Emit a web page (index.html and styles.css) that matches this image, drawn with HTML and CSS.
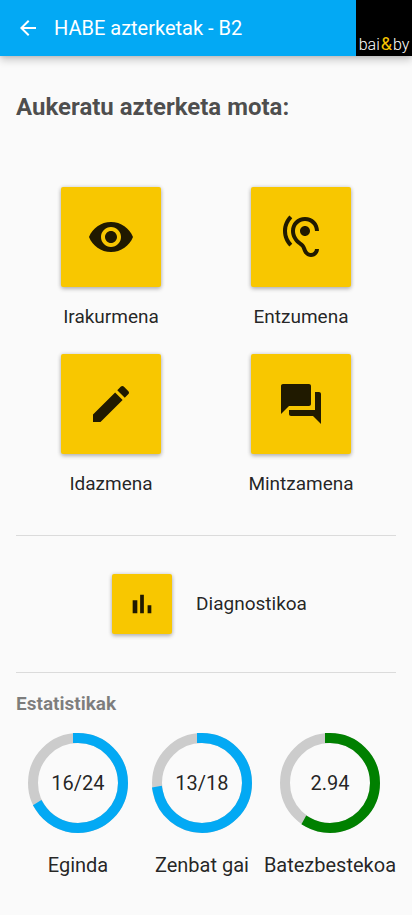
FILE: index.html
```html
<!DOCTYPE html>
<html lang="eu">
<head>
<meta charset="utf-8">
<meta name="viewport" content="width=device-width, initial-scale=1">
<title>HABE azterketak - B2</title>
<link rel="stylesheet" href="styles.css">
</head>
<body>
<header class="toolbar">
  <button class="back" type="button" aria-label="Atzera">
    <svg viewBox="0 0 24 24" width="24" height="24"><path d="M20 11H7.83l5.59-5.59L12 4l-8 8 8 8 1.41-1.41L7.83 13H20v-2z"/></svg>
  </button>
  <span class="title">HABE azterketak - B2</span>
  <a class="logo" href="#">bai<span class="amp">&amp;</span>by</a>
</header>
<main class="content">
  <h1 class="heading">Aukeratu azterketa mota:</h1>
  <section class="types">
    <div class="type">
      <button class="tile" type="button" aria-labelledby="t1">
        <svg viewBox="0 0 24 24" width="48" height="48"><path d="M12 4.5C7 4.5 2.73 7.61 1 12c1.73 4.39 6 7.5 11 7.5s9.27-3.11 11-7.5c-1.73-4.39-6-7.5-11-7.5zM12 17c-2.76 0-5-2.24-5-5s2.24-5 5-5 5 2.24 5 5-2.24 5-5 5zm0-8c-1.66 0-3 1.34-3 3s1.34 3 3 3 3-1.34 3-3-1.34-3-3-3z"/></svg>
      </button>
      <span class="label" id="t1">Irakurmena</span>
    </div>
    <div class="type">
      <button class="tile" type="button" aria-labelledby="t2">
        <svg viewBox="0 0 24 24" width="48" height="48"><path d="M17 20c-.29 0-.56-.06-.76-.15-.71-.37-1.21-.88-1.71-2.38-.51-1.56-1.47-2.29-2.39-3-.79-.61-1.61-1.24-2.32-2.53C9.29 10.98 9 9.93 9 9c0-2.8 2.2-5 5-5s5 2.2 5 5h2c0-3.93-3.07-7-7-7S7 5.07 7 9c0 1.26.38 2.65 1.07 3.9.91 1.65 1.98 2.48 2.85 3.15.81.62 1.39 1.07 1.71 2.05.6 1.82 1.37 2.84 2.73 3.55.51.23 1.07.35 1.64.35 2.21 0 4-1.79 4-4h-2c0 1.1-.9 2-2 2zM7.640 2.640L6.220 1.220C4.230 3.210 3 5.960 3 9s1.230 5.790 3.220 7.780l1.410-1.410C6.010 13.740 5 11.490 5 9s1.010-4.740 2.640-6.360zM11.500 9c0 1.380 1.120 2.500 2.500 2.500s2.500-1.120 2.500-2.500-1.120-2.500-2.500-2.500-2.500 1.120-2.500 2.500z"/></svg>
      </button>
      <span class="label" id="t2">Entzumena</span>
    </div>
    <div class="type">
      <button class="tile" type="button" aria-labelledby="t3">
        <svg viewBox="0 0 24 24" width="48" height="48"><path d="M3 17.25V21h3.750L17.810 9.940l-3.750-3.750L3 17.250zM20.710 7.040c.39-.39.39-1.020 0-1.410l-2.340-2.340c-.39-.39-1.020-.39-1.410 0l-1.830 1.830 3.750 3.750 1.830-1.830z"/></svg>
      </button>
      <span class="label" id="t3">Idazmena</span>
    </div>
    <div class="type">
      <button class="tile" type="button" aria-labelledby="t4">
        <svg viewBox="0 0 24 24" width="48" height="48"><path d="M21 6h-2v9H6v2c0 .55.45 1 1 1h11l4 4V7c0-.55-.45-1-1-1zm-4 6V3c0-.55-.45-1-1-1H3c-.55 0-1 .45-1 1v14l4-4h10c.55 0 1-.45 1-1z"/></svg>
      </button>
      <span class="label" id="t4">Mintzamena</span>
    </div>
  </section>
  <section class="diagnostic">
    <button class="tile small" type="button" aria-labelledby="t5">
      <svg viewBox="0 0 24 24" width="32" height="32"><path d="M5 9.200h3.500V19H5zM10.600 5h2.800v14h-2.800zm5.600 8H19v6h-2.800z"/></svg>
    </button>
    <span class="label" id="t5">Diagnostikoa</span>
  </section>
  <h2 class="subheading">Estatistikak</h2>
  <section class="stats">
    <div class="stat">
      <div class="ring">
        <svg viewBox="0 0 100 100" width="100" height="100"><circle class="track" cx="50" cy="50" r="45"/><circle class="bar" cx="50" cy="50" r="45" pathLength="360" stroke-dasharray="238 360"/></svg>
        <span class="value">16/24</span>
      </div>
      <span class="caption">Eginda</span>
    </div>
    <div class="stat">
      <div class="ring">
        <svg viewBox="0 0 100 100" width="100" height="100"><circle class="track" cx="50" cy="50" r="45"/><circle class="bar" cx="50" cy="50" r="45" pathLength="360" stroke-dasharray="259 360"/></svg>
        <span class="value">13/18</span>
      </div>
      <span class="caption">Zenbat gai</span>
    </div>
    <div class="stat">
      <div class="ring">
        <svg viewBox="0 0 100 100" width="100" height="100"><circle class="track" cx="50" cy="50" r="45"/><circle class="bar good" cx="50" cy="50" r="45" pathLength="360" stroke-dasharray="209 360"/></svg>
        <span class="value">2.94</span>
      </div>
      <span class="caption">Batezbestekoa</span>
    </div>
  </section>
</main>
</body>
</html>
```
FILE: styles.css
```css
* {
  box-sizing: border-box;
}

body {
  margin: 0;
  background: #fafafa;
  color: rgba(0, 0, 0, 0.87);
  font-family: Roboto, sans-serif;
  font-size: 20px;
  line-height: 24px;
}

svg {
  display: block;
  fill: currentColor;
}

button {
  border: 0;
  padding: 0;
  background: none;
  color: inherit;
  cursor: pointer;
}

.toolbar {
  display: flex;
  align-items: center;
  height: 56px;
  padding-left: 16px;
  background: #03a9f4;
  color: #fff;
  box-shadow: 0 0 4px rgba(0, 0, 0, 0.14), 0 4px 8px rgba(0, 0, 0, 0.2);
}

.title {
  flex: 1;
  margin-left: 14px;
}

.logo {
  display: flex;
  align-items: baseline;
  justify-content: center;
  width: 56px;
  height: 56px;
  padding-top: 32px;
  background: #000;
  color: #fff;
  font-size: 16px;
  font-weight: 300;
  text-decoration: none;
}

.amp {
  margin: 0 1px;
  color: #f8c700;
  font-size: 18px;
  font-weight: 400;
}

.content {
  padding: 0 16px;
}

.heading {
  margin: 0;
  padding: 36px 0 64px;
  color: rgba(0, 0, 0, 0.7);
  font-size: 24px;
  line-height: 31px;
}

.types {
  display: grid;
  grid-template-columns: 1fr 1fr;
  row-gap: 25px;
  padding-bottom: 39px;
}

.type {
  display: flex;
  flex-direction: column;
  align-items: center;
  gap: 18px;
}

.label {
  font-size: 19px;
}

.tile {
  display: flex;
  align-items: center;
  justify-content: center;
  width: 100px;
  height: 100px;
  border-radius: 2px;
  background: #f8c700;
  color: rgba(0, 0, 0, 0.87);
  box-shadow: 0 0 4px rgba(0, 0, 0, 0.14), 0 2px 4px rgba(0, 0, 0, 0.24);
}

.small {
  width: 60px;
  height: 60px;
}

.diagnostic {
  display: flex;
  align-items: center;
  justify-content: center;
  gap: 24px;
  padding: 38px 0 38px 7px;
  border: solid rgba(0, 0, 0, 0.12);
  border-width: 1px 0;
}

.subheading {
  margin: 0;
  padding: 19px 0 17px;
  color: rgba(0, 0, 0, 0.5);
  font-size: 19px;
  line-height: 24px;
}

.stats {
  display: flex;
}

.stat {
  flex: 1;
  display: flex;
  flex-direction: column;
  align-items: center;
  gap: 20px;
}

.ring {
  display: grid;
  place-items: center;
}

.ring > * {
  grid-area: 1 / 1;
}

.track,
.bar {
  fill: none;
  stroke: #ccc;
  stroke-width: 10px;
}

.bar {
  stroke: #03a9f4;
  stroke-linecap: square;
  transform: rotate(-90deg);
  transform-origin: center;
}

.good {
  stroke: green;
}
```
